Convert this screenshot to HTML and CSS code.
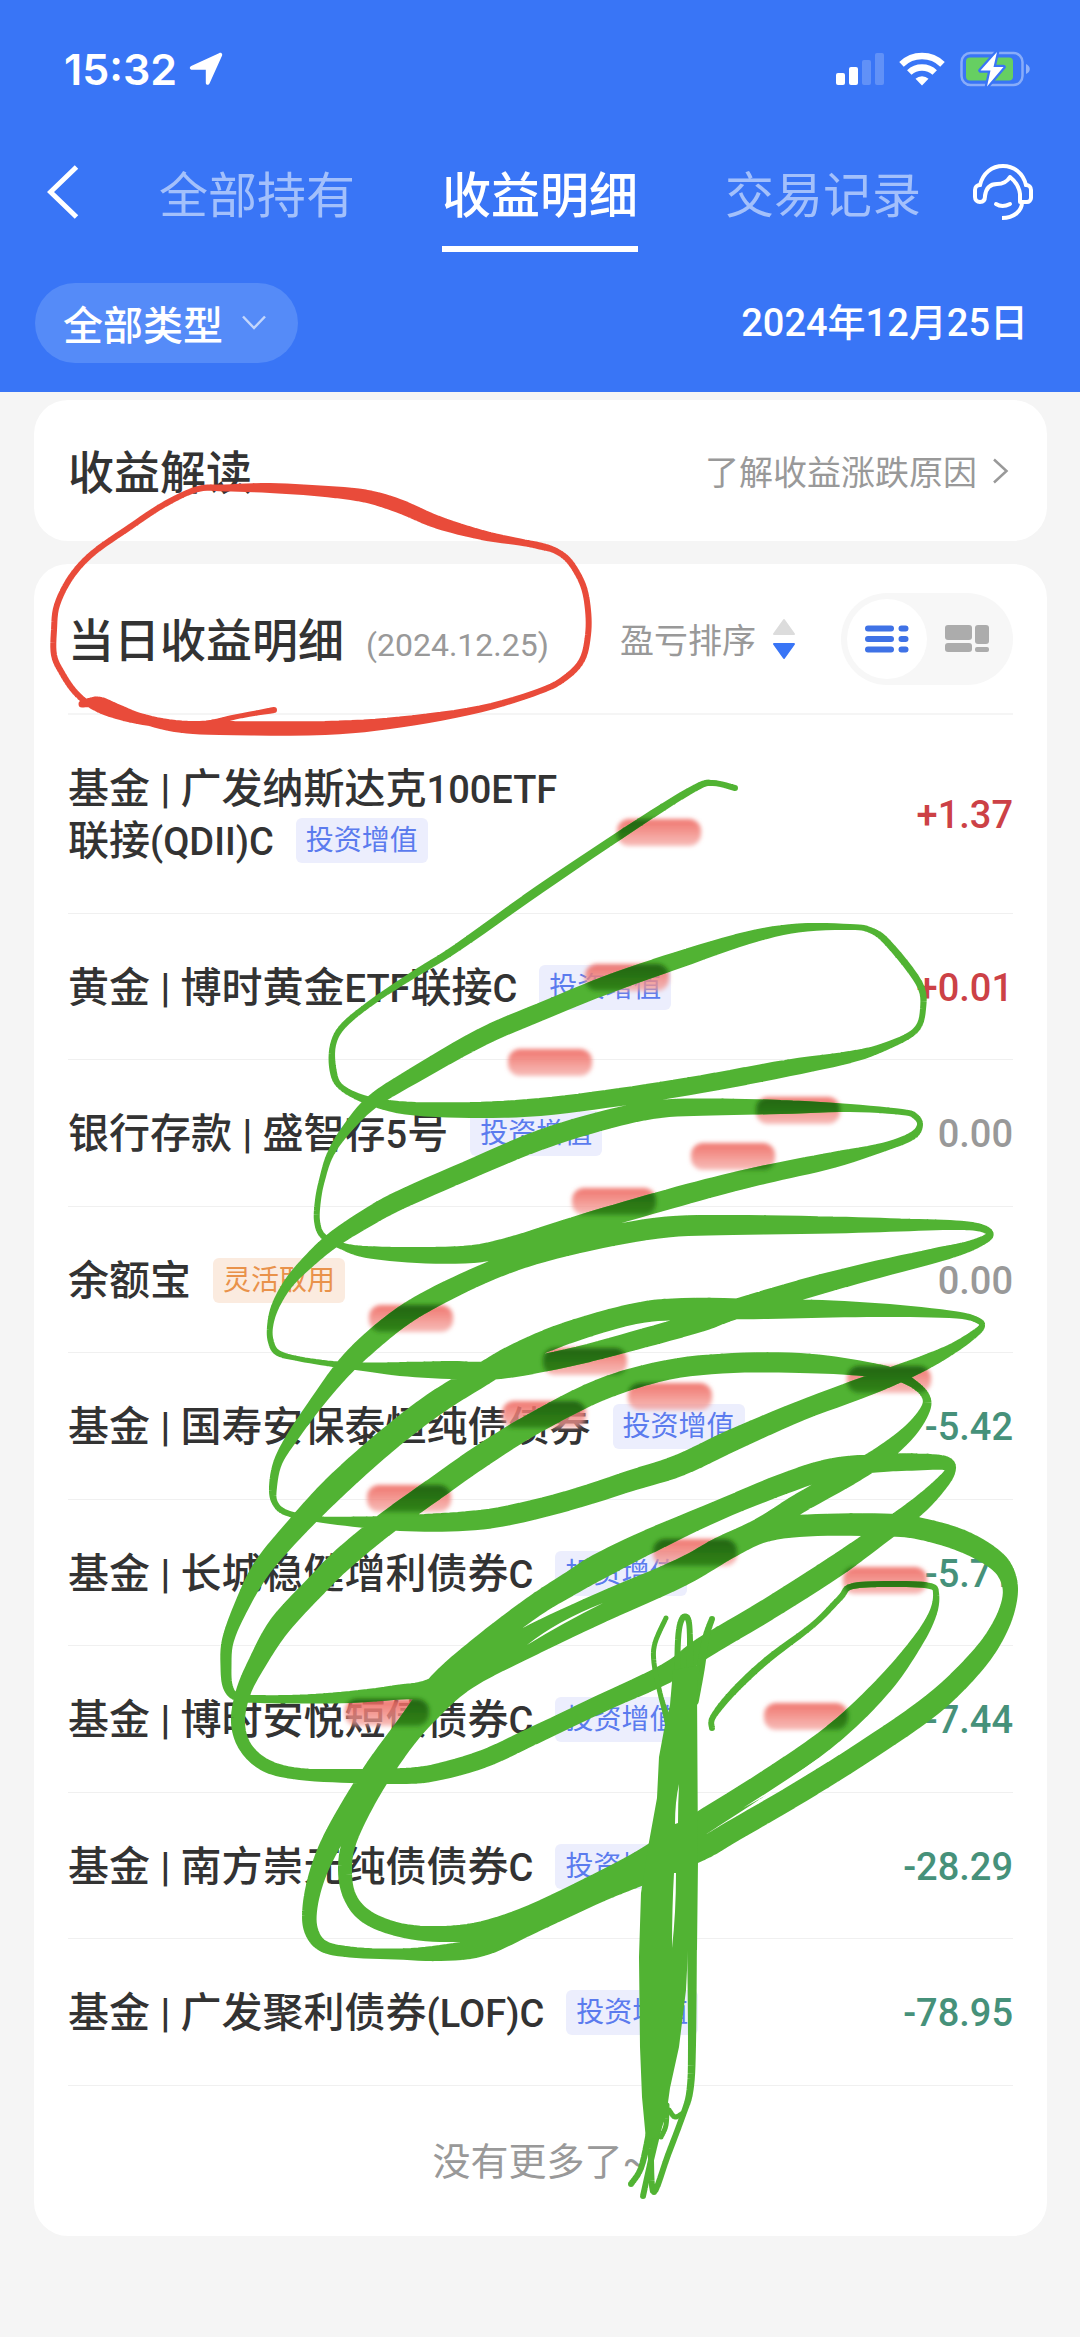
FILE: index.html
```html
<!DOCTYPE html>
<html lang="zh-CN">
<head>
<meta charset="utf-8">
<meta name="viewport" content="width=device-width, initial-scale=1">
<title>收益明细</title>
<link rel="stylesheet" href="styles.css">
</head>
<body>
<div class="page">
  <header class="top">
    <div class="status">
      <div class="status-time">
        <span>15:32</span>
        <svg width="34" height="34" viewBox="0 0 34 34" aria-hidden="true"><path d="M32.5 1.2c.8.6.9 1.600.5 2.500L20.500 31.500c-.9 1.900-3.700 1.700-3.700-.8V17.800H3.200C.3 17.800.2 14.900 2.200 14L30 1.200c.9-.4 1.900-.5 2.500 0z" fill="#fff"/></svg>
      </div>
      <div class="status-icons">
        <svg width="48" height="34" viewBox="0 0 48 34" aria-hidden="true"><g fill="#fff"><rect y="21" width="9" height="12" rx="2"/><rect x="13" y="15" width="9" height="18" rx="2"/><g opacity=".2"><rect x="26" y="8" width="9" height="25" rx="2"/><rect x="39" y="1" width="9" height="32" rx="2"/></g></g></svg>
        <svg width="46" height="34" viewBox="0 0 46 34" aria-hidden="true"><g fill="none" stroke="#fff" stroke-width="6.500"><path d="M2.500 12.300a29.500 29.500 0 0 1 41 0"/><path d="M10.300 20.500a18.500 18.500 0 0 1 25.400 0"/></g><path d="M16.500 26.800a9.500 9.500 0 0 1 13 0L23 33.500z" fill="#fff"/></svg>
        <svg width="70" height="36" viewBox="0 0 70 36" aria-hidden="true"><rect x="1.500" y="2" width="61" height="32" rx="9" fill="none" stroke="#fff" stroke-opacity=".4" stroke-width="2.500"/><path d="M66 13v10c5-2 5-8 0-10z" fill="#fff" opacity=".45"/><rect x="6" y="6.500" width="47" height="23" rx="4" fill="#66cf62"/><path d="M37 1 20.500 19.500h10L27 35.500 43.500 16h-10z" fill="#fff" stroke="#3975f6" stroke-width="4.500" paint-order="stroke" stroke-linejoin="round"/></svg>
      </div>
    </div>

    <div class="nav">
      <button class="icon-button" type="button" aria-label="返回"><svg width="32" height="54" viewBox="0 0 32 54"><path d="M29.500 2 3.500 27l26 25" fill="none" stroke="#fff" stroke-width="5"/></svg></button>
      <nav class="tabs">
        <a class="tab" href="#holdings">全部持有</a>
        <a class="tab tab-active" href="#earnings" aria-current="page">收益明细</a>
        <a class="tab" href="#records">交易记录</a>
      </nav>
      <button class="icon-button icon-button-end" type="button" aria-label="客服"><svg width="60" height="56" viewBox="0 0 60 56"><g fill="none" stroke="#fff" stroke-width="4" stroke-linecap="round" stroke-linejoin="round"><path d="M7 21C10 9 19 2 30 2s20 7 23 19"/><path d="M12 32c1-8 5-12 12-12 6 0 10-2 13-7 5 4 9 9 10 17v8h7c2 0 4-2 4-4v-8c0-3-2-5-5-5"/><path d="M7 21c-3 0-5 2-5 5v7c0 3 2 5 5 5 3 0 5-2 5-6"/><path d="M49 38c0 9-8 16-20 16" stroke-linecap="butt"/><path d="M23 40c4 2.500 9 2.500 14 0"/></g></svg></button>
    </div>

    <div class="filters">
      <button class="type-filter" type="button">全部类型<svg width="24" height="16" viewBox="0 0 24 16" aria-hidden="true"><path d="M1 1.500 12 13 23 1.500" fill="none" stroke="#c3d6fc" stroke-width="2.500"/></svg></button>
      <time class="filter-date" datetime="2024-12-25">2024年12月25日</time>
    </div>
  </header>

  <main class="content">
    <section class="card insight">
      <h2 class="card-title">收益解读</h2>
      <a class="insight-link" href="#insight">了解收益涨跌原因<svg width="17" height="26" viewBox="0 0 17 26" aria-hidden="true"><path d="M2 1.500 14.500 13 2 24.500" fill="none" stroke="#999" stroke-width="2.500"/></svg></a>
    </section>

    <section class="card">
      <div class="list-head">
        <h2 class="card-title">当日收益明细</h2>
        <span class="title-date">(2024.12.25)</span>
        <button class="sort" type="button">盈亏排序<svg width="24" height="42" viewBox="0 0 24 42" aria-hidden="true"><path d="M12 2 22 16H2z" fill="#dcdcdc" stroke="#dcdcdc" stroke-width="2" stroke-linejoin="round"/><path d="M12 40 22 26H2z" fill="#3975f6" stroke="#3975f6" stroke-width="2" stroke-linejoin="round"/></svg></button>
        <div class="view-switch">
          <button class="view view-on" type="button" aria-label="列表" aria-pressed="true"><svg width="44" height="28" viewBox="0 0 44 28"><g stroke="#3f72e6" stroke-width="6" stroke-linecap="round"><path d="M3 3.500h23M3 14h23M3 24.500h23M36.500 3.500h4M36.500 14h4M36.500 24.500h4"/></g></svg></button>
          <button class="view" type="button" aria-label="图块" aria-pressed="false"><svg width="44" height="28" viewBox="0 0 44 28"><g fill="#acacac"><rect width="27" height="15" rx="3"/><rect y="18" width="27" height="9" rx="3"/><rect x="30" width="14" height="19" rx="3"/><rect x="30" y="22" width="14" height="5" rx="2"/></g></svg></button>
        </div>
      </div>

      <ul class="rows">
        <li class="row"><span class="name">基金 | 广发纳斯达克<span class="latin">100ETF</span><br>联接<span class="latin">(QDII)C</span><span class="tag">投资增值</span></span><span class="amount gain">+1.37</span></li>
        <li class="row"><span class="name">黄金 | 博时黄金<span class="latin">ETF</span>联接<span class="latin">C</span><span class="tag">投资增值</span></span><span class="amount gain">+0.01</span></li>
        <li class="row"><span class="name">银行存款 | 盛智存<span class="latin">5</span>号<span class="tag">投资增值</span></span><span class="amount">0.00</span></li>
        <li class="row"><span class="name">余额宝<span class="tag tag-cash">灵活取用</span></span><span class="amount">0.00</span></li>
        <li class="row"><span class="name">基金 | 国寿安保泰恒纯债债券<span class="tag">投资增值</span></span><span class="amount loss">-5.42</span></li>
        <li class="row"><span class="name">基金 | 长城稳健增利债券<span class="latin">C</span><span class="tag">投资增值</span></span><span class="amount loss">-5.71</span></li>
        <li class="row"><span class="name">基金 | 博时安悦短债债券<span class="latin">C</span><span class="tag">投资增值</span></span><span class="amount loss">-7.44</span></li>
        <li class="row"><span class="name">基金 | 南方崇元纯债债券<span class="latin">C</span><span class="tag">投资增值</span></span><span class="amount loss">-28.29</span></li>
        <li class="row"><span class="name">基金 | 广发聚利债券<span class="latin">(LOF)C</span><span class="tag">投资增值</span></span><span class="amount loss">-78.95</span></li>
      </ul>
      <p class="end">没有更多了~</p>
    </section>
  </main>

  <svg class="doodle" viewBox="0 0 1080 2337" aria-hidden="true">
    <defs>
      <linearGradient id="smudge-red" x1="0" y1="0" x2="0" y2="1"><stop offset="0" stop-color="#ee6058" stop-opacity=".85"/><stop offset=".35" stop-color="#f07a72" stop-opacity=".85"/><stop offset="1" stop-color="#f4a09b" stop-opacity=".7"/></linearGradient>
      <linearGradient id="smudge-dark" x1="0" y1="0" x2="0" y2="1"><stop offset="0" stop-color="#1c5a0c" stop-opacity=".9"/><stop offset="1" stop-color="#2a7a16" stop-opacity=".8"/></linearGradient>
      <filter id="soft" x="-10%" y="-20%" width="120%" height="140%"><feGaussianBlur stdDeviation="2"/></filter>
      <clipPath id="tree-clip"></clipPath>
    </defs>
    <g id="smudges"></g>
    <g id="tree" fill="#51b333"></g>
    <g id="smudges-on-tree" clip-path="url(#tree-clip)"></g>
    <path d="M679 1784q-1 20-1 39l-3 1q0-22 4-40zM676 1873q0 40-4 75 0-40 2-75zM527 1645q30-24 76-42-40 20-76 42zM743 1808q60-38 105-70-40 36-105 70z" fill="#fff"/>
    <g id="ring" fill="#e94b3a"></g>
  </svg>
</div>
<script src="doodle.js"></script>
</body>
</html>
```
FILE: styles.css
```css
* {
  box-sizing: border-box;
}

body {
  margin: 0;
  background: #f5f5f5;
  color: #333;
  font-family: Roboto, "Noto Sans CJK SC", sans-serif;
  font-size: 40px;
}

h2,
p,
ul {
  margin: 0;
  padding: 0;
}

button {
  margin: 0;
  padding: 0;
  border: 0;
  background: none;
  color: inherit;
  font: inherit;
}

a {
  color: inherit;
  text-decoration: none;
}

svg {
  display: block;
  flex: none;
}

.page {
  position: relative;
  min-height: 100vh;
  overflow: hidden;
}

.top {
  padding-bottom: 29px;
  background: #3975f6;
  color: #fff;
}

.status {
  display: flex;
  align-items: center;
  justify-content: space-between;
  height: 137px;
  padding: 0 50px 0 64px;
}

.status-time {
  display: flex;
  align-items: center;
  gap: 12px;
  font-family: Inter, sans-serif;
  font-size: 43px;
  font-weight: 600;
}

.status-icons {
  display: flex;
  align-items: center;
  gap: 15px;
}

.nav {
  display: grid;
  grid-template-columns: 1fr auto 1fr;
  align-items: center;
  padding: 0 47px;
}

.icon-button {
  justify-self: start;
  padding-bottom: 6px;
}

.icon-button-end {
  justify-self: end;
}

.tabs {
  display: flex;
  gap: 87px;
}

.tab {
  padding: 25px 0 14px;
  border-bottom: 6px solid transparent;
  color: #a3c0fb;
  font-size: 49px;
  line-height: 70px;
}

.tab-active {
  border-bottom-color: #fff;
  color: #fff;
  font-weight: 500;
}

.filters {
  display: flex;
  align-items: center;
  justify-content: space-between;
  padding: 31px 52px 0 35px;
}

.type-filter {
  display: flex;
  align-items: center;
  gap: 19px;
  height: 80px;
  padding: 0 32px 0 28px;
  border-radius: 40px;
  background: #558bf8;
  font-weight: 500;
}

.filter-date {
  padding-bottom: 8px;
  font-size: 38px;
  font-weight: 500;
}

.content {
  display: flex;
  flex-direction: column;
  gap: 23px;
  padding: 8px 33px 101px 34px;
}

.card {
  padding: 0 34px;
  border-radius: 34px;
  background: #fff;
}

.card-title {
  padding-top: 4px;
  font-size: 46px;
  font-weight: 500;
  line-height: 60px;
}

.insight {
  display: flex;
  align-items: center;
  justify-content: space-between;
  height: 141px;
}

.insight-link {
  display: flex;
  align-items: center;
  gap: 15px;
  padding-right: 4px;
  color: #999;
  font-size: 34px;
}

.list-head {
  display: flex;
  align-items: center;
  height: 151px;
  border-bottom: 2px solid #f5f5f5;
}

.title-date {
  padding: 12px 0 0 22px;
  color: #999;
  font-size: 32px;
}

.sort {
  display: flex;
  align-items: center;
  gap: 16px;
  margin-left: auto;
  color: #999;
  font-size: 34px;
}

.view-switch {
  display: flex;
  margin-left: 45px;
  padding: 6px;
  border-radius: 46px;
  background: #f7f7f7;
}

.view {
  display: grid;
  place-items: center;
  width: 80px;
  height: 80px;
  border-radius: 50%;
}

.view-on {
  background: #fff;
}

.rows {
  list-style: none;
}

.row {
  display: flex;
  align-items: center;
  justify-content: space-between;
  padding: 48px 0 46px;
  border-bottom: 1px solid #f0f0f0;
}

.row:nth-child(even) {
  padding-bottom: 45px;
}

.name {
  font-size: 41px;
  font-weight: 500;
  line-height: 52px;
}

.latin {
  font-size: 38px;
  line-height: 1;
}

.tag {
  display: inline-block;
  margin: 3px 0 0 22px;
  padding: 0 10px;
  border-radius: 6px;
  background: #eceefd;
  color: #5b7bee;
  font-size: 28px;
  font-weight: 400;
  line-height: 45px;
  vertical-align: top;
}

.tag-cash {
  background: #fbebdf;
  color: #e9924a;
}

.amount {
  color: #999;
  font-size: 38px;
  font-weight: 500;
  line-height: 52px;
}

.gain {
  color: #cc4146;
}

.loss {
  color: #46917a;
}

.end {
  padding: 50px 0 48px;
  color: #999;
  font-size: 38px;
  line-height: 52px;
  text-align: center;
}

/* Hand-drawn marks lying over the whole page */
.doodle {
  position: absolute;
  top: 0;
  left: 0;
  width: 100%;
  pointer-events: none;
}
```
FILE: doodle.js
```js
// Pen strokes are lists of x, y, width; each becomes one filled outline.
const RING = [
  [82,704,7,98,702,11,115,709,12,140,718,10,175,726,12,220,728,14,325,728,14,400,722,11,480,709,7,540,691,6,565,678,6,582,660,6,588,635,6,588,610,6,583,585,6,570,562,6,556,551,6,540,546,7,520,542,7,482,535,10,437,522,13,399,506,14,365,496,13,320,491,11,270,488,10,225,488,7,198,489,6,165,504,6,130,527,6,93,553,6,71,577,6,57,605,6,54,630,6,54,655,6,62,673,6,75,692,6,92,706,6,115,715,7,150,722,8,200,725,8,235,717,5,274,710,6]
];

const TREE = [
  [735,788,6,713,783,6,695,788,7,640,822,8,540,889,9,458,947,8,413,975,7,375,1000,6,344,1025,6,333,1045,6,333,1070,7,341,1087,6,367,1100,8,406,1108,13,470,1110,16,540,1107,18,620,1097,18,702,1084,18,788,1068,17,850,1057,12,884,1047,8,915,1031,6,923,1009,6,919,983,7,888,943,7,870,930,6,850,927,6,798,928,9,747,938,13,678,960,17,609,984,18,540,1012,18,482,1037,18,413,1076,16,372,1102,14,346,1130,10,330,1155,7,322,1180,6,318,1200,6,317,1221,6,323,1236,6,342,1246,7,367,1252,12,417,1255,16,473,1254,18,517,1245,20,567,1229,20,617,1214,20,680,1196,20,733,1182,19,781,1171,18,833,1160,16,884,1147,9,912,1136,8,920,1125,6,915,1116,6,902,1112,6,850,1108,8,781,1107,14,712,1107,17,660,1109,18,609,1119,19,540,1140,20,466,1171,19,400,1200,19,367,1218,18,333,1240,16,307,1263,13,288,1284,10,275,1307,8,270,1327,6,271,1342,6,278,1353,6,300,1359,5,333,1364,6,367,1367,9,400,1369,14,450,1370,18,500,1370,18,567,1358,18,633,1341,19,700,1322,20,733,1310,20,800,1290,20,867,1272,18,933,1256,15,967,1247,11,987,1238,8,989,1232,7,977,1227,8,950,1225,10,900,1225,13,833,1225,17,733,1225,20,667,1227,21,600,1238,21,533,1255,20,483,1274,19,433,1298,20,400,1318,20,367,1345,20,343,1369,18,317,1402,14,293,1436,12,278,1462,9,273,1487,8,275,1503,6,287,1513,6,317,1519,6,360,1522,11,400,1523,16,450,1522,19,500,1517,20,567,1501,20,633,1480,21,680,1465,22,733,1440,22,800,1411,20,867,1386,20,917,1366,16,950,1350,11,973,1335,8,982,1326,6,977,1320,6,957,1315,7,900,1311,12,833,1309,17,767,1309,20,683,1309,22,633,1314,21,567,1333,22,517,1354,22,483,1374,23,433,1405,24,383,1444,24,333,1489,24,293,1531,21,262,1568,19,242,1605,15,228,1640,12,226,1667,11,228,1687,10,237,1697,8,260,1699,8,300,1699,9,350,1697,12,400,1692,15,430,1688,18,470,1668,20,533,1635,22,600,1605,24,680,1571,24,720,1548,22,760,1528,20,800,1503,20,850,1475,20,883,1454,18,910,1431,14,925,1410,10,926,1397,8,915,1385,8,893,1374,12,850,1367,16,800,1363,20,733,1363,20,667,1370,20,600,1390,22,533,1424,22,483,1455,23,433,1490,23,383,1526,23,343,1559,23,317,1585,22,280,1625,22,257,1663,18,243,1693,15,238,1723,14,246,1748,13,267,1766,13,300,1774,12,350,1776,14,400,1776,16,433,1773,17,483,1759,18,533,1736,18,600,1704,18,667,1673,20,703,1648,22,767,1610,22,833,1568,22,877,1537,20,917,1507,18,940,1485,14,950,1471,11,945,1463,14,917,1462,17,883,1463,18,833,1468,20,783,1484,21,717,1511,20,650,1541,24,600,1566,26,573,1582,24,533,1607,22,483,1645,22,440,1684,24,407,1728,24,377,1768,23,350,1810,22,330,1845,20,317,1876,17,310,1907,15,311,1930,14,323,1946,12,350,1952,11,396,1954,11,440,1953,16,483,1946,20,533,1922,22,600,1891,22,647,1872,22,700,1850,22,733,1831,22,800,1792,22,867,1750,22,933,1704,22,977,1661,20,1000,1627,17,1010,1597,15,1007,1575,17,993,1558,20,960,1540,22,917,1528,22,883,1525,23,817,1525,22,767,1530,23,730,1546,24,680,1574,26,600,1609,28,533,1642,26,467,1676,26,430,1709,24,402,1744,20,372,1793,16,350,1840,14,345,1870,14,350,1897,13,367,1917,14,400,1930,14,440,1934,16,483,1930,18,533,1914,20,600,1884,24,647,1860,26,700,1824,24,767,1781,22,833,1734,20,883,1686,18,917,1642,12,933,1613,8,936,1593,6,930,1586,6,900,1584,6,853,1586,6,840,1598,6,813,1625,6,767,1660,7,733,1692,7,713,1717,6,712,1728,6],
  [666,1618,5,655,1643,5,654,1663,5,660,1693,5,666,1715,6,672,1740,8],
  [677,1700,6,678,1640,6,682,1619,6,688,1619,6,690,1640,6,690,1700,8],
  [712,1619,6,706,1637,7,700,1670,9,692,1700,14],
  [692,1930,10,692,2045,8,690,2090,7,683,2115,6,668,2155,6,654,2192,6,651,2160,6,652,2130,7],
  [643,2196,6,651,2160,6,659,2125,7],
  [631,2184,6,641,2168,6,649,2135,7],
  [683,2113,5,675,2117,5,669,2110,5],
  [661,2137,5,666,2125,5,667,2105,5]
];

const TRUNK = 'M673 1670L670 1705L664 1730L659 1757L657 1798L649 1842L641 1893L639 1957L640 2047L642 2097L646 2140L657 2138L666 2117L670 2088L679 2047L686 1990L688 1950L697 1950L698 1860L697 1687L700 1665Z';

const SMUDGES = [[659,832],[627,977],[550,1062],[798,1110],[733,1156],[614,1201],[411,1318],[585,1361],[544,1414],[670,1396],[409,1498],[889,1379],[695,1552],[885,1580],[387,1712],[806,1716]];

function spline(a, b, c, d, t) {
  return 0.5 * (2 * b + (c - a) * t + (2 * a - 5 * b + 4 * c - d) * t * t + (3 * b - a - 3 * c + d) * t * t * t);
}

function smooth(flat) {
  const p = [];
  for (let i = 0; i < flat.length; i += 3) p.push(flat.slice(i, i + 3));
  const out = [];
  for (let i = 0; i < p.length - 1; i++) {
    const q = [p[Math.max(i - 1, 0)], p[i], p[i + 1], p[Math.min(i + 2, p.length - 1)]];
    for (let s = 0; s < 6; s++) out.push([0, 1, 2].map(k => spline(q[0][k], q[1][k], q[2][k], q[3][k], s / 6)));
  }
  out.push(p[p.length - 1]);
  return out;
}

function outline(flat) {
  const pts = smooth(flat);
  let d = '';
  pts.forEach(([x, y, w], i) => {
    const r = w / 2;
    d += `M${x - r} ${y}a${r} ${r} 0 1 1 ${w} 0a${r} ${r} 0 1 1 ${-w} 0z`;
    if (!i) return;
    const [px, py, pw] = pts[i - 1];
    const len = Math.hypot(x - px, y - py) || 1;
    const nx = (y - py) / len / 2;
    const ny = (px - x) / len / 2;
    d += `M${px + nx * pw} ${py + ny * pw}L${x + nx * w} ${y + ny * w}L${x - nx * w} ${y - ny * w}L${px - nx * pw} ${py - ny * pw}z`;
  });
  return d;
}

function add(parent, tag, attrs) {
  const el = document.createElementNS('http://www.w3.org/2000/svg', tag);
  for (const k in attrs) el.setAttribute(k, attrs[k]);
  document.getElementById(parent).append(el);
}

RING.forEach(s => add('ring', 'path', { d: outline(s) }));
TREE.map(outline).concat(TRUNK).forEach(d => {
  add('tree', 'path', { d });
  add('tree-clip', 'path', { d });
});
SMUDGES.forEach(([x, y]) => {
  const box = { x: x - 42, y: y - 13, width: 84, height: 27, rx: 12, filter: 'url(#soft)' };
  add('smudges', 'rect', { ...box, fill: 'url(#smudge-red)' });
  add('smudges-on-tree', 'rect', { ...box, fill: 'url(#smudge-dark)' });
});
```
